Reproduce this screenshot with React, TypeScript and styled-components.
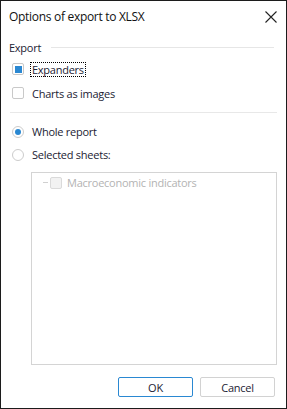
import styled, { createGlobalStyle } from 'styled-components';

const GlobalStyle = createGlobalStyle`
    html, body {
        margin: 0;
        padding: 0;
        background: #ffffff;
    }
    body {
        font-family: "Open Sans", "Noto Sans", sans-serif;
        font-size: 11px;
        letter-spacing: -0.25px;
        color: #222222;
    }
`;

const Window = styled.div`
    box-sizing: border-box;
    width: 287px;
    height: 409px;
    border: 1px solid #1c1c1c;
    background: #ffffff;
    display: flex;
    flex-direction: column;
`;

const Header = styled.div`
    display: flex;
    flex-direction: row;
    align-items: center;
    height: 31px;
    padding: 0 9px 0 8px;
`;

const Title = styled.h1`
    margin: 0;
    font-size: 12px;
    font-weight: 400;
    letter-spacing: -0.3px;
    color: #111111;
    flex: 1;
`;

const CloseButton = styled.button`
    display: flex;
    align-items: center;
    justify-content: center;
    border: none;
    background: transparent;
    padding: 0;
    width: 12px;
    height: 12px;
    margin-top: 1px;
`;

const Body = styled.div`
    flex: 1;
    display: flex;
    flex-direction: column;
    padding: 4px 9px 0 8px;
`;

const SectionHeader = styled.div`
    display: flex;
    flex-direction: row;
    align-items: center;
    gap: 9px;
    height: 20px;
    margin-top: 1px;
`;

const SectionLine = styled.div`
    flex: 1;
    height: 1px;
    background: #e6e6e6;
    margin-right: 3px;
`;

const Row = styled.label<{ $height: number }>`
    display: flex;
    flex-direction: row;
    align-items: center;
    gap: 8px;
    height: ${p => p.$height}px;
    padding-left: 3px;
`;

const Box = styled.span<{ $checked?: boolean; $disabled?: boolean }>`
    box-sizing: border-box;
    width: 12px;
    height: 12px;
    border: 1px solid ${p => (p.$disabled ? '#dadada' : '#c9c9c9')};
    border-radius: 2px;
    background: ${p => (p.$disabled ? '#f2f2f2' : '#ffffff')};
    display: flex;
    align-items: center;
    justify-content: center;
    flex-shrink: 0;

    &::after {
        content: '';
        display: ${p => (p.$checked ? 'block' : 'none')};
        width: 7px;
        height: 7px;
        background: #2a88d2;
    }
`;

const Radio = styled.span<{ $checked?: boolean }>`
    box-sizing: border-box;
    width: 12px;
    height: 12px;
    border: 1px solid #cccccc;
    border-radius: 50%;
    display: flex;
    align-items: center;
    justify-content: center;
    flex-shrink: 0;

    &::after {
        content: '';
        display: ${p => (p.$checked ? 'block' : 'none')};
        width: 6px;
        height: 6px;
        border-radius: 50%;
        background: #2a88d2;
    }
`;

const Caption = styled.span<{ $focused?: boolean }>`
    color: #222233;
    padding: 0 1px;
    margin-left: -1px;
    outline: ${p => (p.$focused ? '1px dotted #000000' : 'none')};
    line-height: 13px;
`;

const Separator = styled.div`
    height: 1px;
    background: #e8e8e8;
    margin: 7px 0 7px 1px;
`;

const TreeBox = styled.div`
    box-sizing: border-box;
    margin: 6px 0 0 22px;
    height: 193px;
    border: 1px solid #d4d4d4;
    padding: 3px 0 0 11px;
`;

const TreeItem = styled.div`
    display: flex;
    flex-direction: row;
    align-items: center;
    height: 13px;
    gap: 4px;
`;

const TreeDash = styled.span`
    width: 5px;
    height: 1px;
    background: #d0d0d0;
    margin-right: -2px;
`;

const TreeLabel = styled.span`
    color: #b3b3b3;
    margin-left: 1px;
`;

const Footer = styled.div`
    display: flex;
    flex-direction: row;
    justify-content: flex-end;
    gap: 7px;
    padding: 0 11px 11px 0;
`;

const Button = styled.button<{ $primary?: boolean }>`
    box-sizing: border-box;
    width: 75px;
    height: 20px;
    border: 1px solid ${p => (p.$primary ? '#2a88d2' : '#d2d2d2')};
    border-radius: 2px;
    background: #ffffff;
    font-family: inherit;
    font-size: 11px;
    letter-spacing: -0.25px;
    color: #222233;
    padding: 0;
`;

export default function App() {
    return (
        <>
            <GlobalStyle />
            <Window>
                <Header>
                    <Title>Options of export to XLSX</Title>
                    <CloseButton aria-label="Close">
                        <svg width="12" height="12" viewBox="0 0 12 12">
                            <path d="M0.5 0.5 L11.5 11.5 M11.5 0.5 L0.5 11.5" stroke="#222" strokeWidth="1.1" />
                        </svg>
                    </CloseButton>
                </Header>
                <Body>
                    <SectionHeader>
                        <Caption>Export</Caption>
                        <SectionLine />
                    </SectionHeader>
                    <Row $height={24}>
                        <Box $checked />
                        <Caption $focused>Expanders</Caption>
                    </Row>
                    <Row $height={24}>
                        <Box />
                        <Caption>Charts as images</Caption>
                    </Row>
                    <Separator />
                    <Row $height={23}>
                        <Radio $checked />
                        <Caption>Whole report</Caption>
                    </Row>
                    <Row $height={23}>
                        <Radio />
                        <Caption>Selected sheets:</Caption>
                    </Row>
                    <TreeBox>
                        <TreeItem>
                            <TreeDash />
                            <Box $disabled />
                            <TreeLabel>Macroeconomic indicators</TreeLabel>
                        </TreeItem>
                    </TreeBox>
                </Body>
                <Footer>
                    <Button $primary>OK</Button>
                    <Button>Cancel</Button>
                </Footer>
            </Window>
        </>
    );
}
